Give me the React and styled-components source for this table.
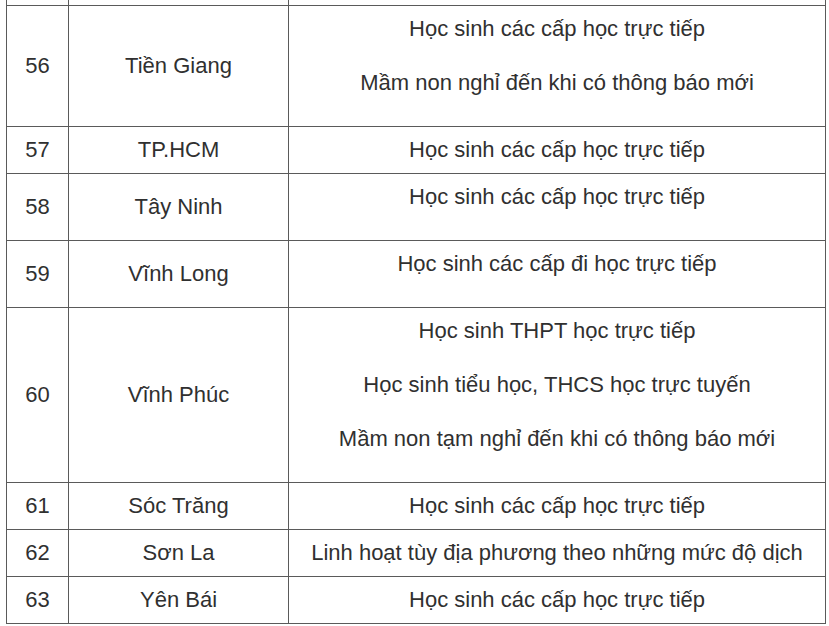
import React from "react";
import styled, { createGlobalStyle } from "styled-components";

const GlobalStyle = createGlobalStyle`
  html, body {
    margin: 0;
    padding: 0;
    background: #ffffff;
  }
  body {
    font-family: "Liberation Sans", Arial, sans-serif;
    color: #303030;
  }
`;

const rows = [
  { no: 56, name: "Tiền Giang", notes: ["Học sinh các cấp học trực tiếp", "Mầm non nghỉ đến khi có thông báo mới"] },
  { no: 57, name: "TP.HCM", text: "Học sinh các cấp học trực tiếp" },
  { no: 58, name: "Tây Ninh", notes: ["Học sinh các cấp học trực tiếp"] },
  { no: 59, name: "Vĩnh Long", notes: ["Học sinh các cấp đi học trực tiếp"] },
  {
    no: 60,
    name: "Vĩnh Phúc",
    notes: [
      "Học sinh THPT học trực tiếp",
      "Học sinh tiểu học, THCS học trực tuyến",
      "Mầm non tạm nghỉ đến khi có thông báo mới",
    ],
  },
  { no: 61, name: "Sóc Trăng", text: "Học sinh các cấp học trực tiếp" },
  { no: 62, name: "Sơn La", text: "Linh hoạt tùy địa phương theo những mức độ dịch" },
  { no: 63, name: "Yên Bái", text: "Học sinh các cấp học trực tiếp" },
];

export default function App() {
  return (
    <>
      <GlobalStyle />
      <Page>
        <Table>
          <colgroup>
            <col style={{ width: 62 }} />
            <col style={{ width: 220 }} />
            <col style={{ width: 537 }} />
          </colgroup>
          <tbody>
            <CutRow>
              <td />
              <td />
              <td />
            </CutRow>
            {rows.map((r) => (
              <tr key={r.no}>
                <Cell>{r.no}</Cell>
                <Cell>{r.name}</Cell>
                <Cell>
                  {r.notes ? r.notes.map((n) => <Note key={n}>{n}</Note>) : r.text}
                </Cell>
              </tr>
            ))}
          </tbody>
        </Table>
      </Page>
    </>
  );
}

const Page = styled.div`
  padding: 0 0 0 6px;
`;

const Table = styled.table`
  width: 820px;
  border-collapse: collapse;
  table-layout: fixed;
  font-size: 22px;
  line-height: 34px;
`;

const Cell = styled.td`
  border: 1px solid #5a5a5a;
  padding: 6px 2px;
  text-align: center;
  vertical-align: middle;
  white-space: nowrap;
`;

const CutRow = styled.tr`
  height: 5px;
  td {
    height: 5px;
    padding: 0;
    border-left: 1px solid #5a5a5a;
    border-right: 1px solid #5a5a5a;
  }
`;

const Note = styled.p`
  margin: 0 0 20px;
`;
